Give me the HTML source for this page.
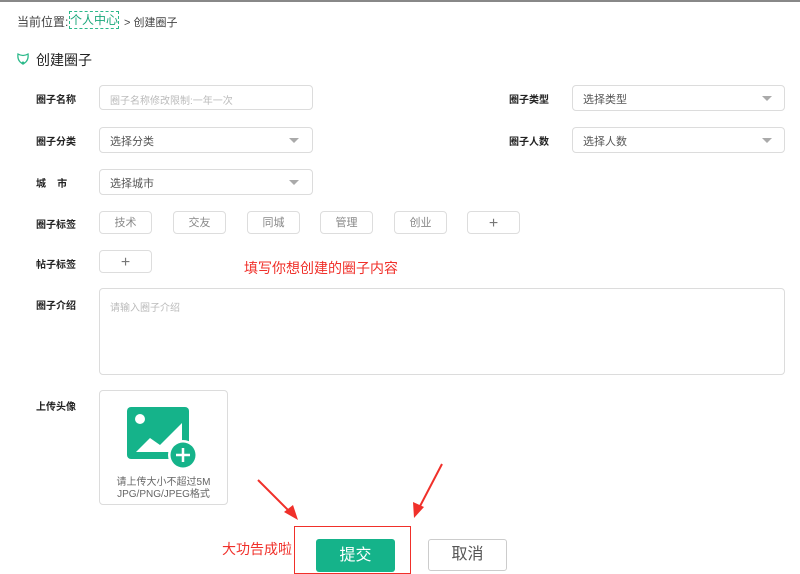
<!DOCTYPE html>
<html><head><meta charset="utf-8"><style>
body{margin:0;width:800px;height:574px;background:#fff;position:relative;overflow:hidden;font-family:"Liberation Sans","Noto Sans CJK SC",sans-serif;color:#333}
.a{position:absolute;white-space:nowrap}
.lab{font-size:10px;color:#222;font-weight:bold}
.box{position:absolute;border:1px solid #dcdcdc;border-radius:4px;box-sizing:border-box;background:#fff}
.ph{font-size:11px;color:#555;position:absolute;left:10px;top:5px}
.tri{position:absolute;width:0;height:0;border-left:5px solid transparent;border-right:5px solid transparent;border-top:5px solid #aaa}
.tag{position:absolute;top:211px;width:53px;height:23px;border:1px solid #ddd;border-radius:4px;box-sizing:border-box;font-size:11px;color:#888;text-align:center;line-height:23px}
.red{color:#f0302a;font-size:14px}
</style></head><body>
<div class="a" style="left:0;top:0;width:800px;height:2px;background:#888"></div>
<div class="a" style="left:17px;top:13px;font-size:12px;color:#444">当前位置:</div>
<div class="a" style="left:69px;top:11px;width:50px;height:18px;border:1px dashed #2bb98a;box-sizing:border-box;font-size:12px;color:#1aa77a;text-align:center;line-height:16px">个人中心</div>
<div class="a" style="left:124px;top:14px;font-size:11px;color:#444">&gt; 创建圈子</div>
<svg class="a" style="left:16px;top:52px" width="14" height="14" viewBox="0 0 14 14"><path d="M2 2 Q7 5 12 2 Q13 9 7 12 Q1 9 2 2Z" fill="none" stroke="#2bb98a" stroke-width="1.3"/><circle cx="7" cy="11" r="1.5" fill="#2bb98a"/></svg>
<div class="a" style="left:36px;top:50px;font-size:14px;color:#222">创建圈子</div>

<div class="a lab" style="left:36px;top:91px">圈子名称</div>
<div class="box" style="left:99px;top:85px;width:214px;height:25px"><span class="ph" style="color:#bbb;font-size:10px;top:6px">圈子名称修改限制:一年一次</span></div>
<div class="a lab" style="left:509px;top:91px">圈子类型</div>
<div class="box" style="left:572px;top:85px;width:213px;height:26px"><span class="ph">选择类型</span><div class="tri" style="left:189px;top:10px"></div></div>

<div class="a lab" style="left:36px;top:133px">圈子分类</div>
<div class="box" style="left:99px;top:127px;width:214px;height:26px"><span class="ph">选择分类</span><div class="tri" style="left:189px;top:10px"></div></div>
<div class="a lab" style="left:509px;top:133px">圈子人数</div>
<div class="box" style="left:572px;top:127px;width:213px;height:26px"><span class="ph">选择人数</span><div class="tri" style="left:189px;top:10px"></div></div>

<div class="a lab" style="left:36px;top:175px">城&nbsp;&nbsp;&nbsp;&nbsp;市</div>
<div class="box" style="left:99px;top:169px;width:214px;height:26px"><span class="ph">选择城市</span><div class="tri" style="left:189px;top:10px"></div></div>

<div class="a lab" style="left:36px;top:216px">圈子标签</div>
<div class="tag" style="left:99px">技术</div>
<div class="tag" style="left:173px">交友</div>
<div class="tag" style="left:247px">同城</div>
<div class="tag" style="left:320px">管理</div>
<div class="tag" style="left:394px">创业</div>
<div class="tag" style="left:467px;font-size:16px;color:#777">+</div>

<div class="a lab" style="left:36px;top:256px">帖子标签</div>
<div class="tag" style="left:99px;top:250px;font-size:16px;color:#777">+</div>
<div class="a red" style="left:244px;top:258px">填写你想创建的圈子内容</div>

<div class="a lab" style="left:36px;top:297px">圈子介绍</div>
<div class="box" style="left:99px;top:288px;width:686px;height:87px"><span class="ph" style="color:#bbb;font-size:10px;top:10px">请输入圈子介绍</span></div>

<div class="a lab" style="left:36px;top:398px">上传头像</div>
<div class="box" style="left:99px;top:390px;width:129px;height:115px"></div>
<svg class="a" style="left:126px;top:406px" width="72" height="64" viewBox="0 0 72 64">
<rect x="1" y="1" width="62" height="52" rx="4" fill="#15b38a"/>
<circle cx="14" cy="13" r="5" fill="#fff"/>
<path d="M10 46 L24 32 L34 39 L56 17 L56 46 Z" fill="#fff"/>
<circle cx="57" cy="49" r="15" fill="#fff"/>
<circle cx="57" cy="49" r="12.5" fill="#15b38a"/>
<path d="M57 42v14M50 49h14" stroke="#fff" stroke-width="2.5"/>
</svg>
<div class="a" style="left:99px;top:477px;width:129px;text-align:center;font-size:10px;color:#666;line-height:12px;white-space:normal">请上传大小不超过5M<br>JPG/PNG/JPEG格式</div>

<svg class="a" style="left:0;top:0" width="800" height="574">
<path d="M258 480 L292 514" stroke="#f0302a" stroke-width="2"/><path d="M298 520 L284 512 L293 505 Z" fill="#f0302a"/>
<path d="M442 464 L418 510" stroke="#f0302a" stroke-width="2"/><path d="M414 518 L413 502 L424 507 Z" fill="#f0302a"/>
</svg>
<div class="a red" style="left:222px;top:539px">大功告成啦</div>
<div class="a" style="left:294px;top:526px;width:117px;height:48px;border:1.5px solid #f0302a;box-sizing:border-box"></div>
<div class="a" style="left:316px;top:539px;width:79px;height:33px;background:#15b38a;border-radius:3px;color:#fff;font-size:16px;text-align:center;line-height:33px">提交</div>
<div class="a" style="left:428px;top:539px;width:79px;height:32px;border:1px solid #ccc;box-sizing:border-box;border-radius:3px;color:#555;font-size:16px;text-align:center;line-height:30px">取消</div>
</body></html>
